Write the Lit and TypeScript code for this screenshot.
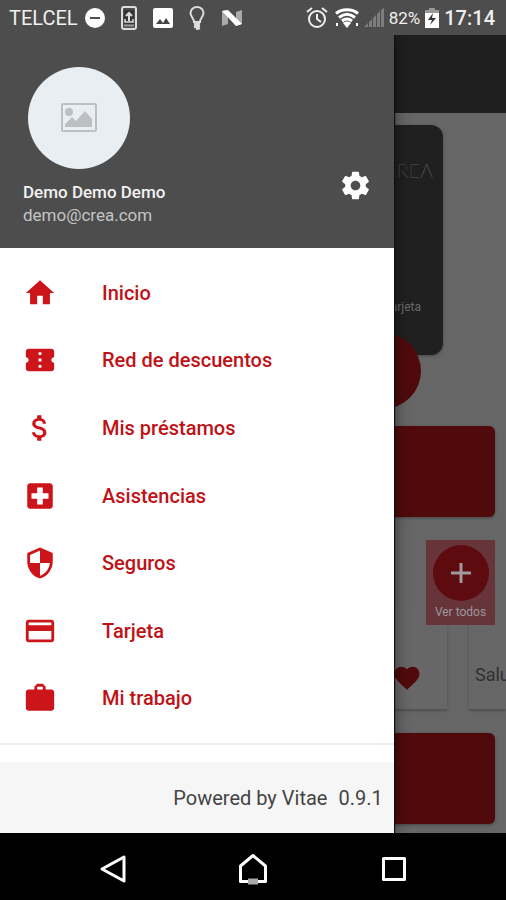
import { LitElement, html, css, svg } from "lit";
import { customElement } from "lit/decorators.js";

const menu = [
  { label: "Inicio", icon: svg`<path d="M10 20v-6h4v6h5v-8h3L12 3 2 12h3v8z"/>` },
  {
    label: "Red de descuentos",
    icon: svg`<path d="M22 10V6c0-1.110-.9-2-2-2H4c-1.100 0-1.990.89-1.990 2v4c1.100 0 1.990.9 1.990 2s-.89 2-2 2v4c0 1.100.9 2 2 2h16c1.100 0 2-.9 2-2v-4c-1.100 0-2-.9-2-2s.9-2 2-2zm-9 7.500h-2v-2h2v2zm0-4.500h-2v-2h2v2zm0-4.500h-2v-2h2v2z"/>`,
  },
  {
    label: "Mis préstamos",
    icon: svg`<path d="M11.800 10.900c-2.270-.59-3-1.200-3-2.150 0-1.090 1.010-1.850 2.700-1.850 1.780 0 2.440.85 2.500 2.100h2.210c-.07-1.720-1.120-3.300-3.210-3.810V3h-3v2.160c-1.940.42-3.500 1.680-3.500 3.610 0 2.310 1.910 3.460 4.700 4.130 2.500.6 3 1.480 3 2.410 0 .69-.49 1.790-2.700 1.790-2.060 0-2.870-.92-2.980-2.100h-2.200c.12 2.190 1.760 3.420 3.680 3.830V21h3v-2.150c1.950-.37 3.500-1.500 3.500-3.550 0-2.840-2.430-3.810-4.700-4.400z"/>`,
  },
  {
    label: "Asistencias",
    icon: svg`<path d="M19 3H5c-1.100 0-1.990.9-1.990 2L3 19c0 1.100.9 2 2 2h14c1.100 0 2-.9 2-2V5c0-1.100-.9-2-2-2zm-1 11h-4v4h-4v-4H6v-4h4V6h4v4h4v4z"/>`,
  },
  {
    label: "Seguros",
    icon: svg`<path d="M12 1L3 5v6c0 5.550 3.840 10.740 9 12 5.160-1.260 9-6.450 9-12V5l-9-4zm0 10.990h7c-.53 4.120-3.280 7.790-7 8.940V12H5V6.300l7-3.110v8.800z"/>`,
  },
  {
    label: "Tarjeta",
    icon: svg`<path d="M20 4H4c-1.110 0-1.990.89-1.990 2L2 18c0 1.110.89 2 2 2h16c1.110 0 2-.89 2-2V6c0-1.110-.89-2-2-2zm0 14H4v-6h16v6zm0-10H4V6h16v2z"/>`,
  },
  {
    label: "Mi trabajo",
    icon: svg`<path d="M20 6h-4V4l-2-2h-4L8 4v2H4c-1.100 0-2 .9-2 2v11c0 1.100.9 2 2 2h16c1.100 0 2-.9 2-2V8c0-1.100-.9-2-2-2zm-6 0h-4V4h4v2z"/>`,
  },
];

@customElement("status-bar")
class StatusBar extends LitElement {
  static styles = css`
    :host {
      display: flex;
      align-items: center;
      justify-content: space-between;
      height: 35px;
      padding: 0 11px 0 9px;
      box-sizing: border-box;
      background: #4d4d4d;
      color: #f0f0f0;
      font-size: 20px;
    }
    .group {
      display: flex;
      align-items: center;
    }
    .notices {
      gap: 16px;
    }
    .carrier {
      margin-right: -9px;
    }
    .system {
      gap: 5px;
    }
    .alarm {
      margin-right: 2px;
    }
    .percent {
      font-size: 17px;
    }
    .time {
      font-weight: 500;
    }
    svg {
      display: block;
      flex: none;
    }
  `;

  render() {
    return html`
      <div class="group notices">
        <span class="carrier">TELCEL</span>
        <svg width="20" height="22" viewBox="0 0 20 22">
          <circle cx="10" cy="11" r="10" fill="#fff" />
          <path d="M5 11h10" stroke="#4d4d4d" stroke-width="2" />
        </svg>
        <svg width="16" height="24" viewBox="0 0 16 24" fill="none" stroke="#ddd">
          <rect x="1" y="1" width="14" height="22" rx="2" stroke-width="2" />
          <rect x="3" y="4" width="10" height="14" fill="#333" stroke="none" />
          <path d="M8 15V8M5 10l3-3 3 3" stroke-width="2" />
          <path d="M4 13v3h8v-3" stroke-width="1.500" />
          <path d="M3 19.500h10" stroke="#999" stroke-width="2" />
        </svg>
        <svg width="20" height="20" viewBox="0 0 20 20">
          <rect width="20" height="20" rx="2" fill="#fff" />
          <path d="M3 16l4-5 3 4 3-5 4 6z" fill="#444" />
        </svg>
        <svg width="16" height="24" viewBox="0 0 16 24" fill="none" stroke="#ddd">
          <path d="M5 16c0-4-3.500-5-3.500-9a6.500 6 0 0 1 13 0c0 4-3.500 5-3.500 9z" stroke-width="2" />
          <path d="M5 18.500l6-1M5 21l6-1M7 23l4-1" stroke-width="2.500" />
        </svg>
        <svg width="22" height="18" viewBox="0 0 22 18">
          <path d="M1 2l6-1v14l-6 2zM15 3l6-2v14l-6 2z" fill="#aaa" />
          <path d="M1 2l6-1 14 14-6 2z" fill="#fff" />
        </svg>
      </div>
      <div class="group system">
        <svg class="alarm" width="22" height="22" viewBox="0 0 22 22" fill="none" stroke="#eee" stroke-width="2">
          <circle cx="11" cy="12" r="8" />
          <path d="M11 7v5l4 3M1 5l5-4M21 5l-5-4" />
        </svg>
        <svg width="24" height="20" viewBox="0 0 24 20" fill="none" stroke="#fff">
          <path d="M1 5.500c6-5 16-5 22 0M4 9.500c5-4 11-4 16 0M7 13c3-2.600 7-2.600 10 0" stroke-width="3" />
          <path d="M8 15c2-2 6-2 8 0l-4 5z" fill="#fff" stroke="none" />
          <path d="M2 15v3M22 15v3" stroke-width="2" />
        </svg>
        <svg width="20" height="20" viewBox="0 0 20 20">
          <path d="M0 19l4-4v4zM5 14l3-3v8H5zM9 10l3-3v12H9zM13 6l3-3v16h-3zM17 2l3-2v19h-3z" fill="#7d7d7d" />
        </svg>
        <span class="percent">82%</span>
        <svg width="14" height="20" viewBox="0 0 14 20">
          <path d="M4 0h6v2h4v18H0V2h4z" fill="#fff" />
          <path d="M4 0h6v2h4v3H0V2h4z" fill="#999" />
          <path d="M8 5l-5 7h4l-2 5 6-7H7z" fill="#333" />
        </svg>
        <span class="time">17:14</span>
      </div>
    `;
  }
}

@customElement("home-page")
class HomePage extends LitElement {
  static styles = css`
    :host {
      display: block;
      height: 100%;
      background: #666;
      color: #303030;
    }
    button {
      font: inherit;
      border: 0;
      padding: 0;
      display: block;
    }
    .bar {
      height: 78px;
      background: #1f1f1f;
    }
    .content {
      display: flex;
      flex-direction: column;
      padding: 12px 11px 0;
    }
    .card {
      height: 230px;
      margin: 0 52px;
      padding: 32px 10px 38px;
      box-sizing: border-box;
      border-radius: 12px;
      background: #202020;
      box-shadow: 0 1px 3px #444;
      color: #6b6b6b;
      display: flex;
      flex-direction: column;
      justify-content: space-between;
      align-items: flex-end;
    }
    .brand {
      color: #8a8a8a;
      font: 100 20px/26px Lato, sans-serif;
    }
    .kind {
      font-size: 12px;
      line-height: 20px;
      padding-right: 12px;
    }
    .round {
      align-self: flex-end;
      width: 76px;
      height: 76px;
      margin: -22px 74px 17px 0;
      border-radius: 50%;
      background: #500a0c;
    }
    .block {
      width: 100%;
      height: 91px;
      border-radius: 6px;
      background: #500a0c;
      box-shadow: 0 1px 3px #444;
    }
    .more {
      position: relative;
      align-self: flex-end;
      width: 69px;
      height: 85px;
      margin-top: 23px;
      background: #67343a;
      color: #999;
      font-size: 12px;
      line-height: 16px;
      display: flex;
      flex-direction: column;
      align-items: center;
      justify-content: center;
      gap: 3px;
    }
    .plus {
      display: block;
      width: 56px;
      height: 56px;
      border-radius: 50%;
      background: #5d0b0f;
    }
    .tiles {
      display: flex;
      gap: 22px;
      height: 100px;
      margin: -16px -11px 24px 0;
    }
    .tile {
      display: flex;
      align-items: center;
      justify-content: flex-end;
      padding: 38px 25px 0 0;
      box-sizing: border-box;
      flex: 1;
      background: #676767;
      box-shadow: 0 2px 2px #505050;
    }
    .cut {
      flex: 0 0 37px;
      justify-content: flex-start;
      padding: 30px 0 0 6px;
      overflow: hidden;
      font-size: 18px;
    }
  `;

  render() {
    return html`
      <div class="bar"></div>
      <div class="content">
        <div class="card">
          <span class="brand">CREA</span>
          <span class="kind">Tarjeta</span>
        </div>
        <button class="round" aria-label="Tarjeta"></button>
        <button class="block" aria-label="Red de descuentos"></button>
        <button class="more">
          <svg class="plus" viewBox="0 0 56 56"><path d="M18 28h20M28 18v20" stroke="#a09a9a" stroke-width="3" /></svg>
          <span>Ver todos</span>
        </button>
        <div class="tiles">
          <div class="tile">
            <svg width="30" height="30" viewBox="1 0 22 24" fill="#500a0c">
              <path d="M12 21.350l-1.450-1.320C5.400 15.360 2 12.280 2 8.500 2 5.420 4.420 3 7.500 3c1.740 0 3.410.81 4.500 2.090C13.090 3.810 14.760 3 16.500 3 19.580 3 22 5.420 22 8.500c0 3.780-3.400 6.860-8.550 11.540L12 21.350z" />
            </svg>
          </div>
          <div class="tile cut">Salu</div>
        </div>
        <button class="block" aria-label="Seguros"></button>
      </div>
    `;
  }
}

@customElement("side-drawer")
class SideDrawer extends LitElement {
  static styles = css`
    :host {
      display: flex;
      flex-direction: column;
      background: #fff;
      box-shadow: 1px 0 1px #111, 2px 0 14px rgba(0, 0, 0, 0.4);
    }
    header {
      display: flex;
      align-items: flex-end;
      justify-content: space-between;
      height: 213px;
      padding: 0 22px 21px 23px;
      box-sizing: border-box;
      background: #4d4d4d;
      color: #c4c4c4;
      font-size: 17px;
      line-height: 23px;
    }
    .avatar {
      display: block;
      width: 102px;
      height: 102px;
      margin: 0 0 12px 5px;
      border-radius: 50%;
      background: #e9eef2;
    }
    .name {
      color: #f2f2f2;
      font-weight: 500;
    }
    .gear {
      display: block;
      padding: 0;
      margin-bottom: 25px;
      border: 0;
      background: none;
      color: #fff;
    }
    .gear svg {
      display: block;
    }
    nav {
      flex: 1;
      display: flex;
      flex-direction: column;
      padding: 11px 0;
      border-bottom: 2px solid #ececec;
    }
    a {
      flex: 1;
      display: flex;
      align-items: center;
      gap: 45px;
      min-height: 48px;
      padding-left: 23px;
      color: #bf1217;
      font-size: 20px;
      font-weight: 500;
      text-decoration: none;
    }
    a svg {
      fill: #cb151b;
    }
    footer {
      display: flex;
      align-items: center;
      justify-content: flex-end;
      gap: 11px;
      height: 71px;
      margin-top: 17px;
      padding-right: 11px;
      background: #f6f6f6;
      color: #444;
      font-size: 20px;
    }
  `;

  render() {
    return html`
      <header>
        <div>
          <svg class="avatar" viewBox="0 0 102 102" fill="#bcc0c2">
            <rect x="34" y="37" width="34" height="27" rx="1" fill="none" stroke="#bcc0c2" stroke-width="2" />
            <circle cx="41" cy="45" r="4" />
            <path d="M37 60v-3l7-7 4 4 9-10 7 8v8z" />
          </svg>
          <div class="name">Demo Demo Demo</div>
          <div>demo@crea.com</div>
        </div>
        <button class="gear" aria-label="Ajustes">
          <svg width="33" height="33" viewBox="0 0 24 24" fill="currentColor">
            <path d="M19.430 12.980c.04-.32.07-.64.07-.98s-.03-.66-.07-.98l2.110-1.650c.19-.15.24-.42.12-.64l-2-3.460c-.12-.22-.39-.3-.61-.22l-2.490 1c-.52-.4-1.080-.73-1.690-.98l-.38-2.650C14.460 2.180 14.250 2 14 2h-4c-.25 0-.46.18-.49.42l-.38 2.650c-.61.25-1.170.59-1.690.98l-2.490-1c-.23-.09-.49 0-.61.22l-2 3.460c-.13.22-.07.49.12.64l2.110 1.650c-.04.32-.07.65-.07.98s.03.66.07.98l-2.110 1.650c-.19.15-.24.42-.12.64l2 3.460c.12.22.39.3.61.22l2.490-1c.52.4 1.080.73 1.690.98l.38 2.650c.03.24.24.42.49.42h4c.25 0 .46-.18.49-.42l.38-2.650c.61-.25 1.170-.59 1.690-.98l2.490 1c.23.09.49 0 .61-.22l2-3.460c.12-.22.07-.49-.12-.64l-2.110-1.650zM12 15.500c-1.930 0-3.500-1.570-3.500-3.500s1.570-3.500 3.500-3.500 3.500 1.570 3.500 3.500-1.570 3.500-3.500 3.500z" />
          </svg>
        </button>
      </header>
      <nav>
        ${menu.map(
          (item) => html`<a href="#">
            <svg width="34" height="34" viewBox="0 0 24 24">${item.icon}</svg>
            <span>${item.label}</span>
          </a>`
        )}
      </nav>
      <footer><span>Powered by Vitae</span><span>0.9.1</span></footer>
    `;
  }
}

@customElement("app-root")
class AppRoot extends LitElement {
  static styles = css`
    :host {
      display: flex;
      flex-direction: column;
      min-height: 100vh;
      font-family: Roboto, sans-serif;
    }
    .stage {
      position: relative;
      flex: 1;
      display: grid;
      overflow: hidden;
    }
    .drawer {
      position: absolute;
      top: 0;
      bottom: 0;
      left: 0;
      right: 22%;
      margin-right: 1px;
    }
    .keys {
      display: flex;
      align-items: center;
      justify-content: center;
      gap: 113px;
      height: 67px;
      padding-top: 4px;
      box-sizing: border-box;
      background: #000;
    }
    .key {
      padding: 0;
      border: 0;
      background: none;
    }
    .key svg {
      display: block;
      fill: none;
      stroke: #fff;
      stroke-width: 3;
      stroke-linejoin: round;
    }
  `;

  render() {
    return html`
      <status-bar></status-bar>
      <main class="stage">
        <home-page></home-page>
        <side-drawer class="drawer"></side-drawer>
      </main>
      <div class="keys">
        <button class="key" aria-label="Atrás">
          <svg width="28" height="32" viewBox="0 0 28 32"><path d="M26 4v24L4 16z" /></svg>
        </button>
        <button class="key" aria-label="Inicio">
          <svg width="28" height="32" viewBox="0 0 28 32">
            <path d="M1.500 28.500V13L14 2.500 26.500 13v15.500z" />
            <path d="M9 28.500h10" stroke="#aaa" stroke-width="6" />
          </svg>
        </button>
        <button class="key" aria-label="Recientes">
          <svg width="28" height="32" viewBox="0 0 28 32"><rect x="3.500" y="5.500" width="21" height="21" /></svg>
        </button>
      </div>
    `;
  }
}
